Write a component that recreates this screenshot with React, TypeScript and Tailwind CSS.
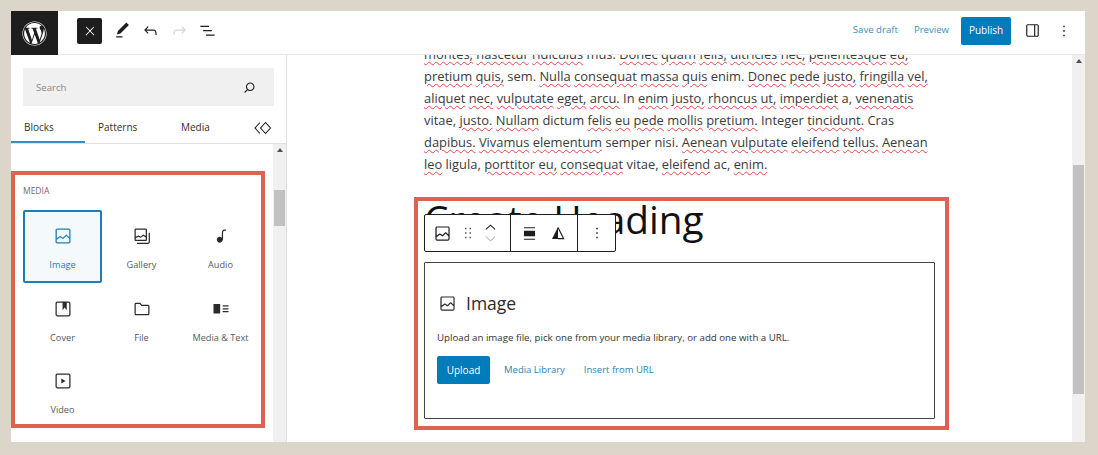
import { FaWordpress } from 'react-icons/fa';

const FONT = "font-['Open_Sans','Noto_Sans',sans-serif]";

function Wp({ d, className = 'w-6 h-6' }: { d: string; className?: string }) {
  return (
    <svg viewBox="0 0 24 24" fill="currentColor" className={className}>
      <path fillRule="evenodd" clipRule="evenodd" d={d} />
    </svg>
  );
}

const ICONS = {
  close: 'M13 11.8l6.1-6.3-1-1-6.1 6.2-6.1-6.2-1 1 6.1 6.3-6.5 6.7 1 1 6.5-6.6 6.5 6.6 1-1z',
  edit: 'M20.1 5.1L16.9 2 6.2 12.7l-1.3 4.4 4.5-1.3L20.1 5.1zM4 20.8h8v-1.5H4v1.5z',
  undo: 'M18.3 11.7c-.6-.6-1.4-.9-2.3-.9H6.7l2.9-3.3-1.1-1-4.5 5L8.5 16l1-1-2.7-2.7H16c.5 0 .9.2 1.3.5 1 1 1 3.4 1 4.5v.3h1.5v-.2c0-1.5 0-4.3-1.5-5.7z',
  redo: 'M15.6 6.5l-1.1 1 2.9 3.3H8c-.9 0-1.7.3-2.3.9-1.4 1.5-1.4 4.2-1.4 5.6v.2h1.5v-.3c0-1.1 0-3.5 1-4.5.3-.3.7-.5 1.3-.5h9.2L14.5 15l1.1 1.1 4.6-4.6-4.6-5z',
  list: 'M3 6h11v1.5H3V6zm3.5 5.5h11V13h-11v-1.5zM21 17H10v1.5h11V17z',
  search: 'M13 5c-3.3 0-6 2.7-6 6 0 1.4.5 2.7 1.3 3.7l-3.8 3.8 1.1 1.1 3.8-3.8c1 .8 2.3 1.3 3.7 1.3 3.3 0 6-2.7 6-6S16.3 5 13 5zm0 10.5c-2.5 0-4.5-2-4.5-4.5s2-4.5 4.5-4.5 4.5 2 4.5 4.5-2 4.5-4.5 4.5z',
  image: 'M19 3H5c-1.1 0-2 .9-2 2v14c0 1.1.9 2 2 2h14c1.1 0 2-.9 2-2V5c0-1.1-.9-2-2-2zM5 4.5h14c.3 0 .5.2.5.5v8.4l-3-2.9c-.3-.3-.8-.3-1 0L11.9 14 9 12c-.3-.2-.6-.2-.8 0l-3.6 2.6V5c-.1-.3.1-.5.4-.5zm14 15H5c-.3 0-.5-.2-.5-.5v-2.4l4.1-3 3 1.9c.3.2.7.2.9-.1L16 12l3.5 3.4V19c0 .3-.2.5-.5.5z',
  gallery: 'M16.375 4.5H4.625a.125.125 0 0 0-.125.125v8.254l2.859-1.54a.75.75 0 0 1 .68-.016l2.384 1.142 2.89-2.074a.75.75 0 0 1 .874 0l2.313 1.66V4.625a.125.125 0 0 0-.125-.125zm.125 9.398-2.75-1.975-2.813 2.02a.75.75 0 0 1-.76.067l-2.444-1.17L4.5 14.583v1.792c0 .069.056.125.125.125h11.75a.125.125 0 0 0 .125-.125v-2.477zM4.625 3C3.728 3 3 3.728 3 4.625v11.75C3 17.273 3.728 18 4.625 18h11.75c.898 0 1.625-.727 1.625-1.625V4.625C18 3.728 17.273 3 16.375 3H4.625zM20 8v11c0 .69-.31 1-.999 1H6v1.5h13.001c1.52 0 2.499-.982 2.499-2.5V8H20z',
  audio: 'M17.7 4.3c-1.2 0-2.8 0-3.8 1-.6.6-.9 1.5-.9 2.6V14c-.6-.6-1.5-1-2.5-1C8.6 13 7 14.6 7 16.5S8.6 20 10.5 20c1.5 0 2.8-1 3.3-2.3.5-.8.7-1.8.7-2.5V7.9c0-.7.2-1.2.5-1.6.6-.6 1.8-.6 2.8-.6h.3V4.3h-.4z',
  cover: 'M18.7 3H5.3C4 3 3 4 3 5.3v13.4C3 20 4 21 5.3 21h13.4c1.3 0 2.3-1 2.3-2.3V5.3C21 4 20 3 18.7 3zm.8 15.7c0 .4-.4.8-.8.8H5.3c-.4 0-.8-.4-.8-.8V5.3c0-.4.4-.8.8-.8h6.2v8.9l2.5-3.1 2.5 3.1V4.5h2.2c.4 0 .8.4.8.8v13.4z',
  file: 'M4.8 4.5h5.1l2 2.5h7.3c1 0 1.8.8 1.8 1.8v8.9c0 1-.8 1.8-1.8 1.8H4.8c-1 0-1.8-.8-1.8-1.8V6.3c0-1 .8-1.8 1.8-1.8zm0 1.5c-.2 0-.3.1-.3.3v11.4c0 .2.1.3.3.3h14.4c.2 0 .3-.1.3-.3V8.8c0-.2-.1-.3-.3-.3h-8l-2-2.5H4.8z',
  mediaText: 'M3 6v11.5h8V6H3zm11 3h7V7.5h-7V9zm7 3.5h-7V11h7v1.5zM14 16h7v-1.5h-7V16z',
  video: 'M18.7 3H5.3C4 3 3 4 3 5.3v13.4C3 20 4 21 5.3 21h13.4c1.3 0 2.3-1 2.3-2.3V5.3C21 4 20 3 18.7 3zm.8 15.7c0 .4-.4.8-.8.8H5.3c-.4 0-.8-.4-.8-.8V5.3c0-.4.4-.8.8-.8h13.4c.4 0 .8.4.8.8v13.4zM10 15l5-3-5-3v6z',
  drag: 'M8 7h2V5H8v2zm0 6h2v-2H8v2zm0 6h2v-2H8v2zm6-14v2h2V5h-2zm0 8h2v-2h-2v2zm0 6h2v-2h-2v2z',
  align: 'M5 5.5h14V4H5v1.5zM5 20h14v-1.5H5V20zm0-4.5h14v-7H5v7z',
  more: 'M13 19h-2v-2h2v2zm0-6h-2v-2h2v2zm0-6h-2V5h2v2z',
  sidebar: 'M18 4H6c-1.1 0-2 .9-2 2v12c0 1.1.9 2 2 2h12c1.1 0 2-.9 2-2V6c0-1.1-.9-2-2-2zm-4 14.5H6c-.3 0-.5-.2-.5-.5V6c0-.3.2-.5.5-.5h8v13zm4.5-.5c0 .3-.2.5-.5.5h-2.5v-13H18c.3 0 .5.2.5.5v12z',
};

const MEDIA_BLOCKS = [
  { label: 'Image', icon: ICONS.image, active: true },
  { label: 'Gallery', icon: ICONS.gallery },
  { label: 'Audio', icon: ICONS.audio },
  { label: 'Cover', icon: ICONS.cover },
  { label: 'File', icon: ICONS.file },
  { label: 'Media & Text', icon: ICONS.mediaText },
  { label: 'Video', icon: ICONS.video },
];

// a trailing * marks a word with the spell-checker squiggle
const LINES = [
  'montes,* nascetur* ridiculus* mus. Donec* quam* felis,* ultricies* nec,* pellentesque* eu,*',
  'pretium* quis,* sem. Nulla* consequat* massa* quis* enim. Donec* pede* justo,* fringilla* vel,*',
  'aliquet* nec,* vulputate* eget,* arcu.* In enim* justo,* rhoncus* ut,* imperdiet* a, venenatis*',
  'vitae, justo.* Nullam* dictum felis* eu* pede* mollis* pretium.* Integer tincidunt.* Cras',
  'dapibus.* Vivamus* elementum* semper nisi. Aenean* vulputate* eleifend* tellus.* Aenean*',
  'leo* ligula, porttitor* eu,* consequat* vitae, eleifend* ac, enim.*',
];

function SpellLine({ text }: { text: string }) {
  return (
    <span className="block whitespace-nowrap">
      {text.split(' ').map((w, i) => {
        const bad = w.endsWith('*');
        const word = bad ? w.slice(0, -1) : w;
        return (
          <span key={i}>
            {i > 0 && ' '}
            {bad ? (
              <span className="underline decoration-wavy decoration-[#e5484d] decoration-[0.7px] underline-offset-2">{word}</span>
            ) : (
              word
            )}
          </span>
        );
      })}
    </span>
  );
}

function Scrollbar({ thumbTop, thumbHeight }: { thumbTop: string; thumbHeight: string }) {
  return (
    <div className="w-[13px] shrink-0 bg-[#f0f0f0] flex flex-col items-center">
      <div className="h-0 mt-[4px] border-x-[3.5px] border-b-[4px] border-x-transparent border-b-[#505050]" />
      <div className={`w-[11px] bg-[#c1c1c1] ${thumbTop} ${thumbHeight}`} />
    </div>
  );
}

function Header() {
  return (
    <header className="h-11 shrink-0 flex items-center pb-1 border-b border-[#e8e8e8] bg-white">
      <div className="w-[47px] h-11 self-start bg-[#1e1e1e] flex items-center justify-center text-white">
        <FaWordpress className="w-[25px] h-[25px]" />
      </div>
      <div className="ml-[19px] w-[25px] h-[26px] rounded-[2px] bg-[#1e1e1e] text-white flex items-center justify-center">
        <Wp d={ICONS.close} className="w-[14px] h-[14px]" />
      </div>
      <div className="ml-[6px] flex text-[#1e1e1e]">
        <span className="w-[28.5px] flex justify-center"><Wp d={ICONS.edit} className="w-[19px] h-[19px]" /></span>
        <span className="w-[28.5px] flex justify-center"><Wp d={ICONS.undo} className="w-[19px] h-[19px]" /></span>
        <span className="w-[28.5px] flex justify-center text-[#d4d4d4]"><Wp d={ICONS.redo} className="w-[19px] h-[19px]" /></span>
        <span className="w-[28.5px] flex justify-center"><Wp d={ICONS.list} className="w-[19px] h-[19px]" /></span>
      </div>
      <div className="ml-auto flex items-center text-[9.6px]">
        <span className="text-[#3a8fc0]">Save draft</span>
        <span className="ml-[16px] text-[#3a8fc0]">Preview</span>
        <span className="ml-[12px] w-[50px] h-[28px] rounded-[2px] bg-[#007cba] text-white text-[10px] flex items-center justify-center">Publish</span>
        <span className="ml-[11px] w-[20px] flex justify-center text-[#1e1e1e]"><Wp d={ICONS.sidebar} className="w-[19px] h-[19px]" /></span>
        <span className="ml-[12px] mr-[11px] w-[20px] flex justify-center text-[#1e1e1e]"><Wp d={ICONS.more} className="w-[18px] h-[18px]" /></span>
      </div>
    </header>
  );
}

function Inserter() {
  return (
    <aside className="w-[276px] shrink-0 border-r border-[#e0e0e0] flex flex-col min-h-0">
      <div className="mx-[12px] mt-[13px] h-[38px] bg-[#f0f0f0] flex items-center justify-between pl-[13px] pr-[16px]">
        <span className="pt-[2px] text-[9.6px] text-[#8a8a8a]">Search</span>
        <Wp d={ICONS.search} className="w-[17px] h-[17px] text-[#1e1e1e]" />
      </div>
      <div className="h-[38px] shrink-0 flex items-center pt-[6px] border-b border-[#e0e0e0] text-[10px] font-medium text-[#2f2f2f]">
        <span className="w-[74px] h-full flex items-center pl-[13px] pt-[2px] border-b-2 border-[#3a8fc0]">Blocks</span>
        <span className="ml-[13px] w-[83px]">Patterns</span>
        <span className="w-[73px]">Media</span>
        <svg viewBox="0 0 18 14" fill="none" stroke="#1e1e1e" strokeWidth="1.1" className="w-[18px] h-[14px]">
          <path d="M6 1.5 1 7l5 5.5" />
          <path d="M11.5 1.5 6.5 7l5 5.5L16.5 7z" />
        </svg>
      </div>
      <div className="flex-1 flex min-h-0">
        <div className="flex-1 min-w-0 pt-[27px]">
          <section className="w-[254px] h-[257px] border-4 border-[#dc6350] pl-[8px] pt-[9px]">
            <h2 className="text-[8.5px] leading-[13px] text-[#6b6b6b] uppercase">Media</h2>
            <div className="mt-[13px] grid grid-cols-[79px_79px_79px] auto-rows-[72.5px]">
              {MEDIA_BLOCKS.map((b) => (
                <div
                  key={b.label}
                  className={`h-[73px] flex flex-col items-center rounded-[2px] ${
                    b.active ? 'border-2 border-[#1a7fb8] bg-[#f4f9fc] text-[#1a7fb8] pt-[14px]' : 'text-[#2b2b2b] pt-[16px]'
                  }`}
                >
                  <Wp d={b.icon} className="w-[20px] h-[20px]" />
                  <span className={`mt-[12px] text-[9.2px] leading-[14px] whitespace-nowrap ${b.active ? '' : 'text-[#5a5a5a]'}`}>{b.label}</span>
                </div>
              ))}
            </div>
          </section>
        </div>
        <Scrollbar thumbTop="mt-[38px]" thumbHeight="h-[36px]" />
      </div>
    </aside>
  );
}

function ImageBlock() {
  return (
    <section className="relative ml-[127px] mt-[22px] w-[535px] h-[233px] border-4 border-[#dc6350] pl-[6px]">
      <h1 className="-mt-[3px] h-[42px] text-[38.8px] leading-[42px] text-[#111] whitespace-nowrap">Create Heading</h1>
      {/* block toolbar sits on top of the heading */}
      <div className="absolute left-[6px] top-[13px] h-[38px] flex items-center bg-white border border-[#1e1e1e] rounded-[2px] text-[#1e1e1e]">
        <div className="w-[86px] h-full flex items-center border-r border-[#1e1e1e] pl-[8px]">
          <Wp d={ICONS.image} className="w-[19px] h-[19px]" />
          <Wp d={ICONS.drag} className="ml-[7px] w-[18px] h-[18px] text-[#555]" />
          <div className="ml-[8px] flex flex-col items-center gap-[6px]">
            <svg viewBox="0 0 12 6" fill="none" stroke="#1e1e1e" strokeWidth="1.1" className="w-[11px] h-[6px]"><path d="M1 5.5 6 1l5 4.5" /></svg>
            <svg viewBox="0 0 12 6" fill="none" stroke="#bbb" strokeWidth="1.1" className="w-[11px] h-[6px]"><path d="M1 .5 6 5l5-4.5" /></svg>
          </div>
        </div>
        <div className="w-[67px] h-full flex items-center border-r border-[#1e1e1e] pl-[9px] gap-[12px]">
          <Wp d={ICONS.align} className="w-[19px] h-[19px]" />
          <svg viewBox="0 0 14 14" className="w-[14px] h-[14px]">
            <path d="M7 1 1 13h6z" fill="#1e1e1e" />
            <path d="M7 1.5 12.6 12.6H7" fill="none" stroke="#1e1e1e" strokeWidth="1.2" />
          </svg>
        </div>
        <div className="w-[37px] flex justify-center">
          <Wp d={ICONS.more} className="w-[18px] h-[18px]" />
        </div>
      </div>
      <div className="mt-[22px] w-[511px] h-[157px] border border-[#444] rounded-[1px] pl-[12px] pt-[29px]">
        <div className="flex items-center h-[22px] text-[#2b2b2b]">
          <Wp d={ICONS.image} className="ml-[1px] w-[19px] h-[19px]" />
          <span className="ml-[9px] text-[17.5px]">Image</span>
        </div>
        <p className="mt-[16px] text-[9.7px] leading-[16px] text-[#333] whitespace-nowrap">
          Upload an image file, pick one from your media library, or add one with a URL.
        </p>
        <div className="mt-[10px] flex items-center text-[9.5px]">
          <span className="w-[53px] h-[28px] rounded-[2px] bg-[#007cba] text-white text-[10px] flex items-center justify-center">Upload</span>
          <span className="ml-[14px] text-[#2e7fb0]">Media Library</span>
          <span className="ml-[19px] text-[#2e7fb0]">Insert from URL</span>
        </div>
      </div>
    </section>
  );
}

export default function App() {
  return (
    <div className={`w-[1098px] h-[455px] bg-[#dcd5ca] pl-[11px] pr-[13px] pt-[11px] pb-[13px] ${FONT}`}>
      <div className="w-full h-full bg-white flex flex-col overflow-hidden">
        <Header />
        <div className="flex-1 flex min-h-0">
          <Inserter />
          <main className="flex-1 min-w-0 overflow-hidden">
            <div className="-mt-[12px] ml-[137px] text-[12.9px] leading-[22px] text-[#3a3a3a]">
              {LINES.map((l) => (
                <SpellLine key={l} text={l} />
              ))}
            </div>
            <ImageBlock />
          </main>
          <Scrollbar thumbTop="mt-[102px]" thumbHeight="h-[229px]" />
        </div>
      </div>
    </div>
  );
}
